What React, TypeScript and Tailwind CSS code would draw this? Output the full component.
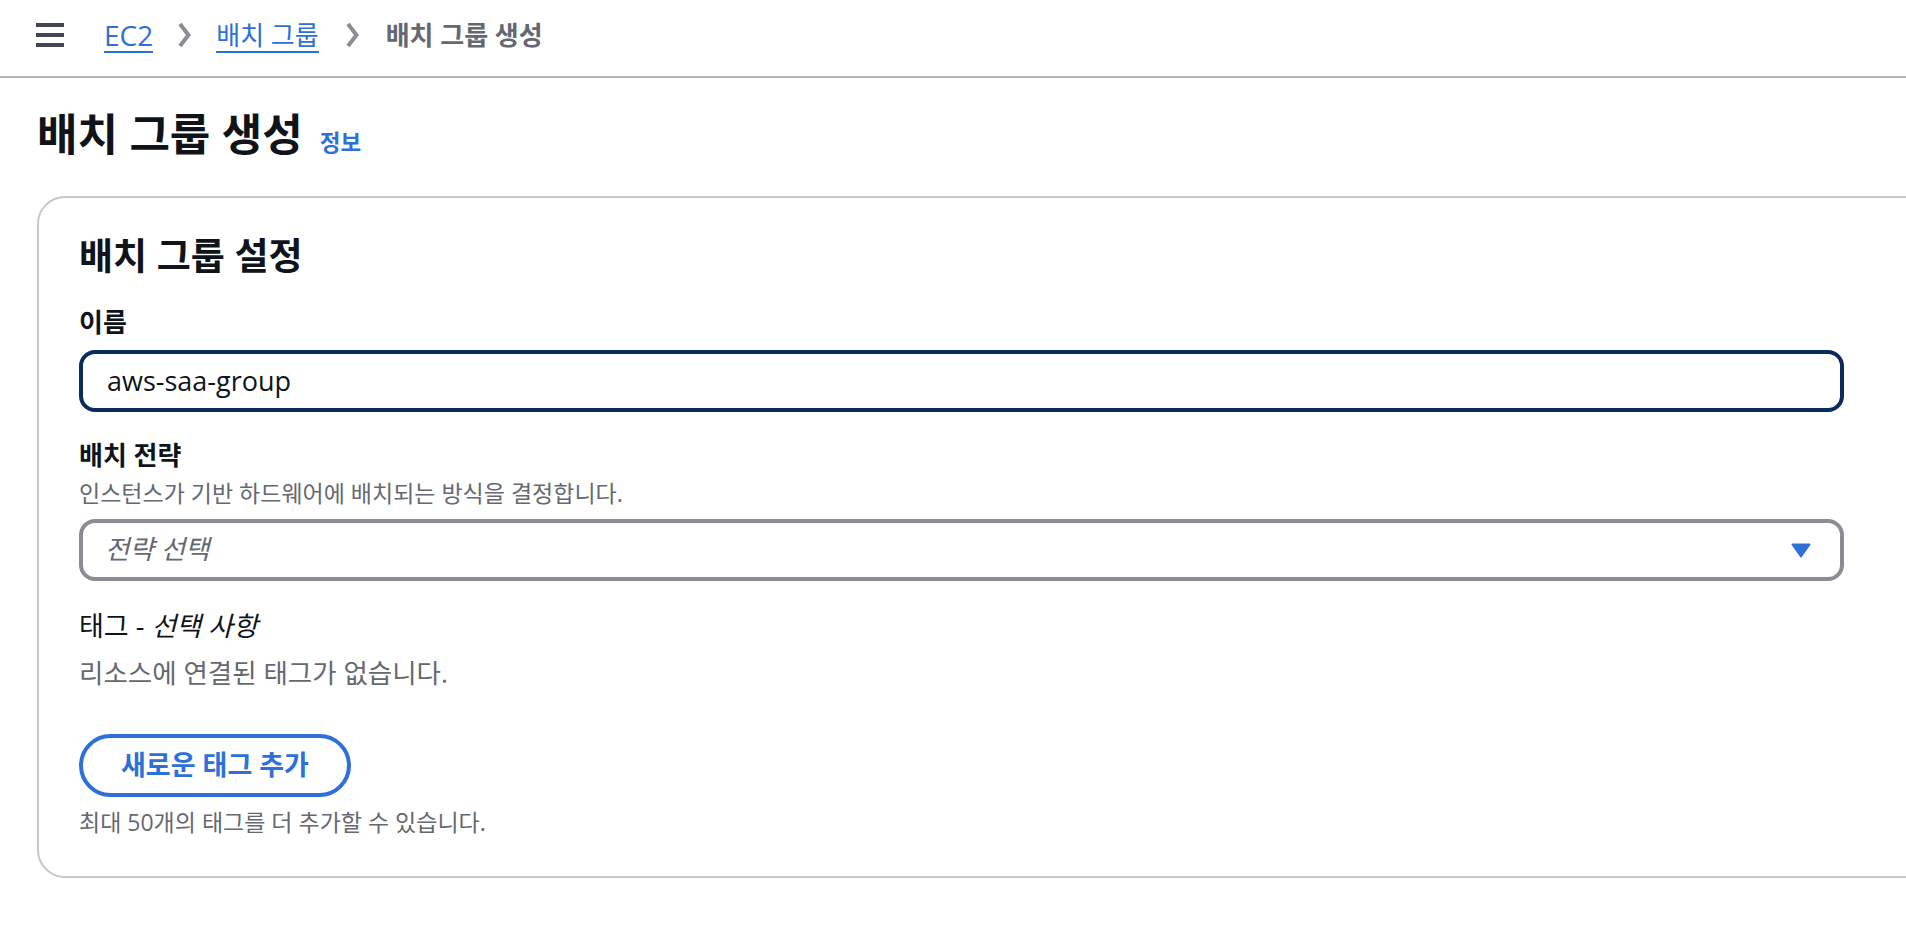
import React from "react";

function Chevron({ className }: { className?: string }) {
  return (
    <svg className={className} width="14" height="26" viewBox="0 0 14 26" fill="none">
      <path d="M3 2 L11.5 13 L3 24" stroke="#8c8c94" strokeWidth="4" strokeLinejoin="miter" />
    </svg>
  );
}

export default function App() {
  return (
    <div className="min-h-screen w-full overflow-hidden bg-white font-['Open_Sans','Noto_Sans_CJK_KR',sans-serif] text-[#0f141a]">
      <header className="flex h-[78px] items-center border-b-2 border-[#b4b4bb] pb-[6px] pl-[36px]">
        <svg width="28" height="24" viewBox="0 0 28 24">
          <rect x="0" y="0" width="28" height="4" fill="#424650" />
          <rect x="0" y="10" width="28" height="4" fill="#424650" />
          <rect x="0" y="20" width="28" height="4" fill="#424650" />
        </svg>
        <nav className="ml-[40px] flex items-center">
          <a className="mt-[2px] border-b-2 border-[#2c70d8] text-[28px] leading-[32px] text-[#2c70d8]">EC2</a>
          <Chevron className="ml-[24px]" />
          <a className="ml-[25px] mt-[2px] border-b-2 border-[#2c70d8] text-[26px] leading-[32px] text-[#2c70d8]">
            배치 그룹
          </a>
          <Chevron className="ml-[26px]" />
          <span className="ml-[27px] text-[26px] font-bold leading-[32px] text-[#656871]">배치 그룹 생성</span>
        </nav>
      </header>

      <main className="px-[37px]">
        <div className="mt-[28px] flex items-baseline">
          <h1 className="text-[44px] font-bold leading-[56px]">배치 그룹 생성</h1>
          <a className="ml-[17px] text-[22.5px] font-bold text-[#2c70d8]">정보</a>
        </div>

        <section className="mt-[34px] w-[1900px] rounded-[28px] border-2 border-[#c6c6cd] pb-[40px] pl-[40px] pt-[36px]">
          <h2 className="text-[37px] font-bold leading-[44px]">배치 그룹 설정</h2>

          <div className="mt-[28px] text-[26px] font-bold leading-[32px]">이름</div>
          <div className="mt-[12px] flex h-[62px] w-[1765px] items-center rounded-[16px] border-[4px] border-[#0b2b5c] px-[24px] text-[27px] text-[#0f141a]">
            aws-saa-group
          </div>

          <div className="mt-[27px] text-[26px] font-bold leading-[32px]">배치 전략</div>
          <div className="mt-[8px] text-[23px] leading-[28px] text-[#656871]">
            인스턴스가 기반 하드웨어에 배치되는 방식을 결정합니다.
          </div>
          <div className="mt-[12px] flex h-[62px] w-[1765px] items-center justify-between rounded-[16px] border-[4px] border-[#8c8c94] pl-[22px] pr-[29px]">
            <span className="text-[26.5px] italic text-[#656871]">전략 선택</span>
            <svg width="20" height="15" viewBox="0 0 20 15">
              <polygon points="1.5,1.5 18.5,1.5 10,13.5" fill="#2c70d8" stroke="#2c70d8" strokeWidth="2" strokeLinejoin="round" />
            </svg>
          </div>

          <div className="mt-[29px] text-[27px] leading-[32px]">
            태그 - <span className="italic">선택 사항</span>
          </div>
          <div className="mt-[15px] text-[26.5px] leading-[32px] text-[#656871]">
            리소스에 연결된 태그가 없습니다.
          </div>

          <button className="mt-[45px] flex h-[63px] w-[272px] items-center justify-center rounded-full border-[4px] border-[#2c70d8] bg-white text-[27px] font-bold text-[#2c70d8]">
            새로운 태그 추가
          </button>
          <div className="mt-[11px] text-[23px] leading-[28px] text-[#656871]">
            최대 50개의 태그를 더 추가할 수 있습니다.
          </div>
        </section>
      </main>
    </div>
  );
}
